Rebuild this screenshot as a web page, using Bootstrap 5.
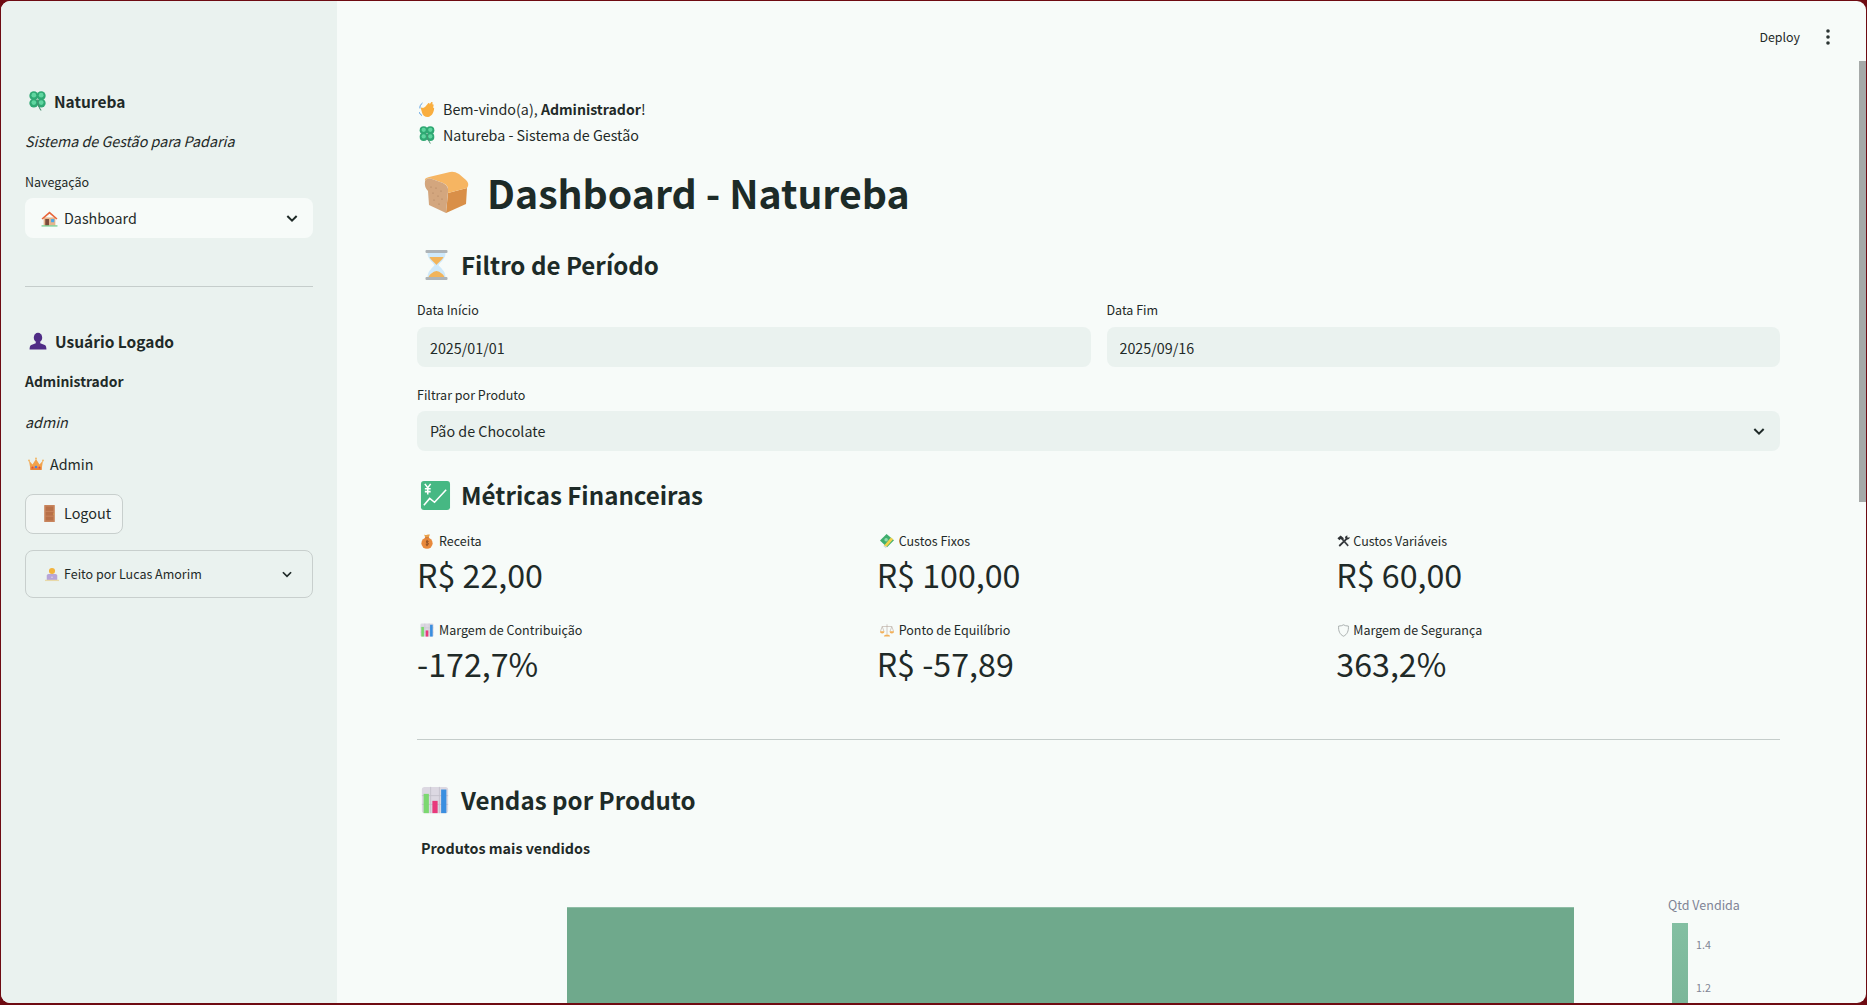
<!DOCTYPE html>
<html lang="pt-BR">
<head>
    <meta charset="UTF-8">
    <meta name="viewport" content="width=device-width, initial-scale=1.0">
    <title>Natureba - Dashboard</title>
    <link href="https://cdn.jsdelivr.net/npm/bootstrap@5.3.0/dist/css/bootstrap.min.css" rel="stylesheet">
    <style>
        html, body {
            height: 100%;
            overflow: hidden;
        }

        body {
            background: #6e0b12;
            font-family: "Noto Sans CJK SC", "Source Sans Pro", "Noto Sans", sans-serif;
            color: #1f2a28;
            font-size: 14.3px;
            padding: 1px 1px 2px 1px;
        }

        .app-frame {
            height: 100%;
            border-radius: 9px;
            overflow: hidden;
            background: #f7fbf9;
        }

        /* Sidebar */
        .side-pane {
            width: 336px;
            flex: none;
            background: #eaf2ef;
            padding: 86px 24px 0 24px;
        }

        .side-title {
            font-size: 15.5px;
            font-weight: 600;
            line-height: 28px;
            margin: 0;
            gap: 8px;
            padding-left: 4px;
        }

        .side-tagline { line-height: 24px; margin: 14px 0 0; }
        .side-label { font-size: 12.5px; line-height: 20px; margin: 19px 0 0; }

        .pick-box {
            height: 40px;
            border-radius: 8px;
            background: #f7fbf9;
            padding: 0 13px 0 16px;
            margin-top: 6px;
            gap: 6px;
        }

        .side-rule {
            border: 0;
            border-top: 1px solid #c5cdcb;
            opacity: 1;
            margin: 48px 0 40px;
        }

        .side-text { line-height: 24px; margin: 0; }
        .side-name { font-weight: 600; margin-top: 14px; font-size: 13.9px; }
        .side-login { margin-top: 17px; }
        .side-role { margin-top: 18px; gap: 6px; padding-left: 3px; }

        .logout-btn {
            height: 40px;
            width: 98px;
            margin-top: 18px;
            border: 1px solid #c8cfcd;
            border-radius: 8px;
            background: #f1f6f4;
            color: #1f2a28;
            font-size: 14.4px;
            padding: 0 0 2px 15px;
            gap: 6px;
        }

        .credit-box {
            height: 48px;
            margin-top: 16px;
            border: 1px solid #c8cfcd;
            border-radius: 8px;
            padding: 0 18px 0 19px;
            font-size: 12.5px;
            gap: 5px;
        }

        /* Main */
        .main-pane {
            position: relative;
            min-width: 0;
            padding: 0 86px 0 80px;
            overflow: hidden;
        }

        .top-strip {
            height: 95px;
            padding: 26px 0 0;
            margin-right: -56px;
            font-size: 12.4px;
            line-height: 20px;
            gap: 20px;
        }

        .page-scroll {
            position: absolute;
            top: 60px;
            right: 0;
            width: 7px;
            height: 441px;
            background: #a5a9a8;
        }

        .hello-line {
            line-height: 26px;
            margin: 0;
            gap: 8px;
            padding-left: 2px;
        }

        .hello-line strong { font-size: 14.1px; }

        .page-title {
            font-size: 39.2px;
            font-weight: 700;
            line-height: 52px;
            margin: 18px 0 0;
            gap: 17px;
            padding-left: 5px;
            color: #1d2b28;
        }

        .block-title {
            font-size: 24.1px;
            font-weight: 600;
            line-height: 40px;
            margin: 24px 0 0;
            gap: 12px;
            padding-left: 3px;
            color: #1d2b28;
        }

        .period-title { margin-top: 27px; }
        .finance-title { gap: 10px; }

        .filter-row { margin-top: 15px; }
        .field-label { font-size: 12.5px; line-height: 20px; margin: 0 0 7px; }

        .date-input.form-control {
            height: 40px;
            border: 0;
            border-radius: 8px;
            background: #eaf2ef;
            color: #1f2a28;
            font-size: 14.3px;
            padding: 0 13px;
        }

        .product-label { margin: 18px 0 6px; }

        .product-box {
            height: 40px;
            border-radius: 8px;
            background: #eaf2ef;
            padding: 0 13px;
        }

        .metric-row { margin-top: 16px; }
        .metric-row + .metric-row { margin-top: 23px; }
        .metric-label { font-size: 12.5px; line-height: 20px; gap: 5px; padding-left: 3px; }
        .metric-label-tight { gap: 3px; padding-left: 1px; }
        .metric-value { font-size: 32.2px; line-height: 46px; margin-top: 0; }

        .main-rule {
            border: 0;
            border-top: 1px solid #c5cdcb;
            opacity: 1;
            margin: 53px 0 40px;
        }

        .chart-title { font-weight: 700; line-height: 22px; margin: 17px 0 0 4px; }

        .chart-area { margin-top: 36px; height: 200px; }
        .chart-bar {
            width: 1007px;
            height: 200px;
            margin: 12px 0 0 150px;
            background: #6fa98c;
            border-top: 1px solid #8fbda6;
        }

        .legend-box { margin-left: 94px; color: #808495; }
        .legend-title { font-size: 12.5px; line-height: 20px; }
        .legend-ramp { margin-top: 8px; gap: 8px; }
        .ramp-bar {
            width: 16px;
            height: 200px;
            background: linear-gradient(#83bfa2, #6fa98c);
        }
        .ramp-ticks { font-size: 10.7px; line-height: 16px; padding-top: 14px; }
        .ramp-ticks div { margin-bottom: 27px; }

        .emoji-svg { flex: none; display: block; }
    </style>
</head>

<body>
    <!-- Shared emoji drawings -->
    <svg width="0" height="0" class="position-absolute">
        <symbol id="e-clover" viewBox="0 0 32 38">
            <g fill="#2fa873">
                <circle cx="9" cy="9" r="8.5"/><circle cx="23" cy="9" r="8.5"/>
                <circle cx="9" cy="23" r="8.5"/><circle cx="23" cy="23" r="8.5"/>
            </g>
            <g fill="#5fd6a0"><circle cx="9" cy="8" r="4.5"/><circle cx="23" cy="8" r="4.5"/><circle cx="9" cy="22" r="4.5"/><circle cx="23" cy="22" r="4.5"/></g>
            <path d="M16 16 q1 14 7 21" stroke="#4a8f70" stroke-width="2" fill="none"/>
        </symbol>
        <symbol id="e-house" viewBox="0 0 32 32">
            <rect x="5" y="14" width="22" height="15" fill="#e6b58c"/>
            <path d="M1 16 16 3l15 13-2 2L16 7 3 18z" fill="#e8663c"/>
            <rect x="8" y="17" width="7" height="12" fill="#7a4a3a"/>
            <rect x="19" y="17" width="6" height="6" fill="#4aa8e8"/>
            <rect x="1" y="29" width="30" height="2" fill="#5cc47a"/>
        </symbol>
        <symbol id="e-user" viewBox="0 0 32 32">
            <ellipse cx="16" cy="10" rx="7.5" ry="8.5" fill="#4f2c85"/>
            <path d="M12 17h8v3l8 3c2 1 3 4 3 8H1c0-4 1-7 3-8l8-3z" fill="#4f2c85"/>
        </symbol>
        <symbol id="e-crown" viewBox="0 0 32 32">
            <path d="M2 9l7 8 7-11 7 11 7-8-3 19H5z" fill="#f2a24a"/>
            <rect x="5" y="23" width="22" height="5" fill="#e8853c"/>
            <circle cx="16" cy="22" r="2.6" fill="#4a7fe0"/>
            <circle cx="9" cy="23" r="2" fill="#e0483c"/><circle cx="23" cy="23" r="2" fill="#e0483c"/>
            <circle cx="2" cy="9" r="1.8" fill="#f2b25a"/><circle cx="16" cy="5" r="1.8" fill="#f2b25a"/><circle cx="30" cy="9" r="1.8" fill="#f2b25a"/>
        </symbol>
        <symbol id="e-door" viewBox="0 0 32 32">
            <rect x="6" y="0" width="20" height="32" rx="1" fill="#c8845c"/>
            <rect x="9" y="3" width="14" height="8" fill="#b87048"/><rect x="9" y="13" width="14" height="7" fill="#b87048"/><rect x="9" y="22" width="14" height="7" fill="#b87048"/>
            <circle cx="24" cy="17" r="1" fill="#e8c040"/>
        </symbol>
        <symbol id="e-coder" viewBox="0 0 32 32">
            <circle cx="16" cy="8" r="7" fill="#f2b33c"/>
            <path d="M4 30V19c0-2 2-4 4-4h16c2 0 4 2 4 4v11z" fill="#b7a5d8"/>
            <rect x="0" y="28" width="32" height="3" fill="#e8d9a8"/>
            <circle cx="16" cy="22" r="1.2" fill="#fff"/>
        </symbol>
        <symbol id="e-wave" viewBox="0 0 32 32">
            <path d="M12 11 18 4c2-2 4 0 3 2l3-4c2-2 4 0 3 2l-1 2c2-1 4 0 3 3l-1 3c2 0 3 2 2 4-1 7-5 14-12 15-7 0-11-4-12-9l-2-7c-1-3 2-4 4-2z" fill="#f9ae3f"/>
            <path d="M0 21c1 3 3 5 6 7M2 14c-1-4 1-8 5-11" stroke="#5a9ee0" stroke-width="2" fill="none"/>
        </symbol>
        <symbol id="e-bread" viewBox="8 6 48 46">
            <path d="M34 30 53 25 52 41 32 50z" fill="#d98f48"/>
            <path d="M11 18Q10 15 15 14L36 9Q40 8 45 11L52 17Q56 21 53 25L34 30Q35 22 29 20L18 16Q13 14 11 18z" fill="#f6b562"/>
            <path d="M11 18Q13 14 18 16L29 20Q35 23 34 29L32 50 15 42 14 28Q10 24 11 18z" fill="#d3a67e"/>
            <g fill="#a87e5c"><circle cx="17" cy="24" r=".6"/><circle cx="22" cy="25" r=".6"/><circle cx="27" cy="28" r=".6"/><circle cx="19" cy="30" r=".6"/><circle cx="24" cy="33" r=".6"/><circle cx="28" cy="36" r=".6"/><circle cx="20" cy="37" r=".6"/><circle cx="25" cy="41" r=".6"/></g>
        </symbol>
        <symbol id="e-hourglass" viewBox="0 0 24 32">
            <rect x="1" y="1" width="22" height="3" rx="1" fill="#aeb4b8"/>
            <rect x="1" y="28" width="22" height="3" rx="1" fill="#aeb4b8"/>
            <path d="M3 4h18c0 6-5 9-7 12 2 3 7 6 7 12H3c0-6 5-9 7-12C8 13 3 10 3 4z" fill="#cfe9fa"/>
            <path d="M5 8h14c-1 3-5 5-7 8-2-3-6-5-7-8z" fill="#f2b45a"/>
            <path d="M4 28c1-3 6-6 8-6s7 3 8 6z" fill="#f2b45a"/>
        </symbol>
        <symbol id="e-yen" viewBox="0 0 32 32">
            <rect x="1" y="1" width="30" height="30" rx="3" fill="#46b883"/>
            <path d="M5 4l3 4 3-4M8 8v7M5 9h6M5 12h6" stroke="#fff" stroke-width="1.6" fill="none"/>
            <path d="M4 26l6-7 5 4 12-13" stroke="#fff" stroke-width="1.6" fill="none"/>
        </symbol>
        <symbol id="e-bag" viewBox="0 0 32 36">
            <path d="M9 1c3 2 5 2 7 1s4-1 7-1l-3 8h-8z" fill="#e8a04a"/>
            <circle cx="16" cy="22" r="13.5" fill="#e8893c"/>
            <rect x="11" y="8" width="10" height="2" fill="#c86c2c"/>
            <path d="M20 18c-3-2-7 0-5 2 2 1 6 2 4 5-2 2-5 1-6 0M16 14v15" stroke="#6e3a1c" stroke-width="1.6" fill="none"/>
        </symbol>
        <symbol id="e-cash" viewBox="0 0 32 32">
            <path d="M0 15 15 0l17 14-16 16z" fill="#3fae6e"/>
            <path d="M9 27 25 8l5 4-15 17z" fill="#f2d24a"/>
            <circle cx="14" cy="13" r="4" fill="#8fdcae"/>
            <path d="M6 26l7 6 3-3z" fill="#cfd4d8"/>
        </symbol>
        <symbol id="e-tools" viewBox="0 0 32 32">
            <path d="M4 25 24 6l3 3L7 29z" fill="#2f3336"/>
            <path d="M26 1c-4 0-7 3-6 7l4 3c4 1 8-2 7-6l-4 2-2-2z" fill="#2f3336"/>
            <path d="M26 28 11 11l3-3 15 17z" fill="#3c4044"/>
            <path d="M1 8l8-7 8 7-4 4-4-2-3 3z" fill="#2f3336"/>
        </symbol>
        <symbol id="e-bars" viewBox="0 0 32 32">
            <rect x="1" y="1" width="30" height="30" rx="3" fill="#dcd8e2"/>
            <path d="M11 1v30M21 1v30M1 11h30M1 21h30" stroke="#c4c0cc" stroke-width="1"/>
            <rect x="3" y="9" width="6" height="22" fill="#7bd870"/>
            <rect x="13" y="17" width="6" height="14" fill="#e83a7c"/>
            <rect x="23" y="4" width="6" height="27" fill="#3a8ee0"/>
        </symbol>
        <symbol id="e-scales" viewBox="0 0 32 32">
            <path d="M16 3v23M5 8h22M5 8l-4 11M5 8l4 11M27 8l-4 11M27 8l4 11" stroke="#b9a9a0" stroke-width="1.4" fill="none"/>
            <path d="M0 19h10c0 4-2 5-5 5s-5-1-5-5zM22 19h10c0 4-2 5-5 5s-5-1-5-5z" fill="#f2b05a"/>
            <path d="M9 31c0-3 3-5 7-5s7 2 7 5z" fill="#f2b05a"/>
        </symbol>
        <symbol id="e-shield" viewBox="0 0 32 32">
            <path d="M4 5c5 0 9-1 12-3 3 2 7 3 12 3 1 12-3 21-12 25C7 26 3 17 4 5z" fill="none" stroke="#9aa0a0" stroke-width="2"/>
        </symbol>
        <symbol id="i-chev" viewBox="0 0 24 24">
            <path d="M5 9l7 7 7-7" fill="none" stroke="currentColor" stroke-width="3"/>
        </symbol>
    </svg>

    <div class="app-frame d-flex">
        <!-- Sidebar -->
        <aside class="side-pane">
            <h2 class="side-title d-flex align-items-center">
                <svg class="emoji-svg" width="17" height="20"><use href="#e-clover"/></svg>Natureba
            </h2>
            <p class="side-tagline fst-italic">Sistema de Gestão para Padaria</p>
            <p class="side-label">Navegação</p>
            <div class="pick-box d-flex align-items-center">
                <svg class="emoji-svg" width="17" height="17"><use href="#e-house"/></svg>
                <span class="flex-grow-1">Dashboard</span>
                <svg class="emoji-svg" width="16" height="16"><use href="#i-chev"/></svg>
            </div>
            <hr class="side-rule">
            <h2 class="side-title d-flex align-items-center">
                <svg class="emoji-svg" width="18" height="18"><use href="#e-user"/></svg>Usuário Logado
            </h2>
            <p class="side-text side-name">Administrador</p>
            <p class="side-text side-login fst-italic">admin</p>
            <p class="side-text side-role d-flex align-items-center">
                <svg class="emoji-svg" width="16" height="16"><use href="#e-crown"/></svg>Admin
            </p>
            <button class="logout-btn d-flex align-items-center" type="button">
                <svg class="emoji-svg" width="17" height="17"><use href="#e-door"/></svg>Logout
            </button>
            <div class="credit-box d-flex align-items-center">
                <svg class="emoji-svg" width="14" height="15"><use href="#e-coder"/></svg>
                <span class="flex-grow-1">Feito por Lucas Amorim</span>
                <svg class="emoji-svg" width="14" height="14"><use href="#i-chev"/></svg>
            </div>
        </aside>

        <!-- Main content -->
        <main class="main-pane flex-grow-1">
            <div class="page-scroll"></div>
            <div class="top-strip d-flex justify-content-end align-items-start">
                <span>Deploy</span>
                <svg width="16" height="20" viewBox="0 0 16 20"><g fill="#2b3533"><circle cx="8" cy="4" r="1.8"/><circle cx="8" cy="10" r="1.8"/><circle cx="8" cy="16" r="1.8"/></g></svg>
            </div>

            <p class="hello-line d-flex align-items-center">
                <svg class="emoji-svg" width="16" height="17"><use href="#e-wave"/></svg>
                <span>Bem-vindo(a), <strong class="fw-semibold">Administrador</strong>!</span>
            </p>
            <p class="hello-line d-flex align-items-center">
                <svg class="emoji-svg" width="16" height="18"><use href="#e-clover"/></svg>
                <span>Natureba - Sistema de Gestão</span>
            </p>

            <h1 class="page-title d-flex align-items-center">
                <svg class="emoji-svg" width="48" height="46"><use href="#e-bread"/></svg>Dashboard - Natureba
            </h1>

            <h2 class="block-title period-title d-flex align-items-center">
                <svg class="emoji-svg ms-1" width="25" height="32"><use href="#e-hourglass"/></svg>Filtro de Período
            </h2>

            <div class="row gx-3 filter-row">
                <div class="col-6">
                    <p class="field-label">Data Início</p>
                    <input class="date-input form-control" value="2025/01/01" readonly>
                </div>
                <div class="col-6">
                    <p class="field-label">Data Fim</p>
                    <input class="date-input form-control" value="2025/09/16" readonly>
                </div>
            </div>

            <p class="field-label product-label">Filtrar por Produto</p>
            <div class="product-box d-flex align-items-center justify-content-between">
                <span>Pão de Chocolate</span>
                <svg class="emoji-svg" width="16" height="16"><use href="#i-chev"/></svg>
            </div>

            <h2 class="block-title finance-title d-flex align-items-center">
                <svg class="emoji-svg" width="31" height="31"><use href="#e-yen"/></svg>Métricas Financeiras
            </h2>

            <div class="row gx-3 metric-row">
                <div class="col-4">
                    <div class="metric-label d-flex align-items-center"><svg class="emoji-svg" width="14" height="15"><use href="#e-bag"/></svg>Receita</div>
                    <div class="metric-value">R$ 22,00</div>
                </div>
                <div class="col-4">
                    <div class="metric-label d-flex align-items-center"><svg class="emoji-svg" width="14" height="14"><use href="#e-cash"/></svg>Custos Fixos</div>
                    <div class="metric-value">R$ 100,00</div>
                </div>
                <div class="col-4">
                    <div class="metric-label metric-label-tight d-flex align-items-center"><svg class="emoji-svg" width="13" height="13"><use href="#e-tools"/></svg>Custos Variáveis</div>
                    <div class="metric-value">R$ 60,00</div>
                </div>
            </div>
            <div class="row gx-3 metric-row">
                <div class="col-4">
                    <div class="metric-label d-flex align-items-center"><svg class="emoji-svg" width="14" height="14"><use href="#e-bars"/></svg>Margem de Contribuição</div>
                    <div class="metric-value">-172,7%</div>
                </div>
                <div class="col-4">
                    <div class="metric-label d-flex align-items-center"><svg class="emoji-svg" width="14" height="14"><use href="#e-scales"/></svg>Ponto de Equilíbrio</div>
                    <div class="metric-value">R$ -57,89</div>
                </div>
                <div class="col-4">
                    <div class="metric-label metric-label-tight d-flex align-items-center"><svg class="emoji-svg" width="13" height="13"><use href="#e-shield"/></svg>Margem de Segurança</div>
                    <div class="metric-value">363,2%</div>
                </div>
            </div>

            <hr class="main-rule">

            <h2 class="block-title d-flex align-items-center mt-0 ps-1">
                <svg class="emoji-svg" width="28" height="28"><use href="#e-bars"/></svg>Vendas por Produto
            </h2>
            <p class="chart-title">Produtos mais vendidos</p>

            <div class="chart-area d-flex">
                <div class="chart-bar"></div>
                <div class="legend-box">
                    <div class="legend-title">Qtd Vendida</div>
                    <div class="legend-ramp d-flex ms-1">
                        <div class="ramp-bar"></div>
                        <div class="ramp-ticks"><div>1.4</div><div>1.2</div></div>
                    </div>
                </div>
            </div>
        </main>
    </div>

    <script src="https://cdn.jsdelivr.net/npm/bootstrap@5.3.0/dist/js/bootstrap.bundle.min.js"></script>
</body>
</html>
